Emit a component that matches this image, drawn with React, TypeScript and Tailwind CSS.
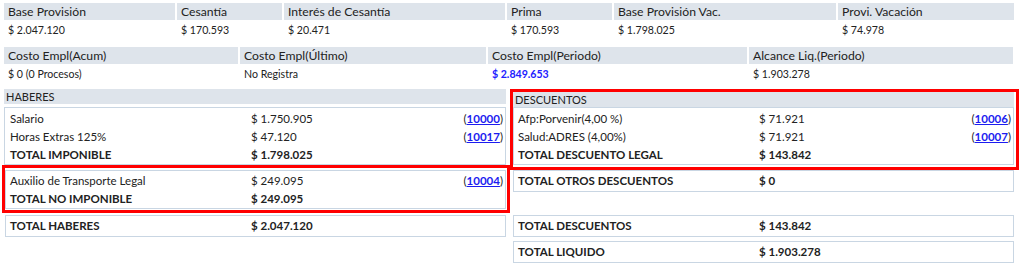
const top1 = [
  { label: 'Base Provisión', value: '$ 2.047.120' },
  { label: 'Cesantía', value: '$ 170.593' },
  { label: 'Interés de Cesantía', value: '$ 20.471' },
  { label: 'Prima', value: '$ 170.593' },
  { label: 'Base Provisión Vac.', value: '$ 1.798.025' },
  { label: 'Provi. Vacación', value: '$ 74.978' },
]

const top2 = [
  { label: 'Costo Empl(Acum)', value: '$ 0 (0 Procesos)' },
  { label: 'Costo Empl(Último)', value: 'No Registra' },
  { label: 'Costo Empl(Periodo)', value: '$ 2.849.653', blue: true },
  { label: 'Alcance Liq.(Periodo)', value: '$ 1.903.278' },
]

type Item = { label: string; amount: string; code?: string; bold?: boolean }

function InfoTable({
  items,
  cols,
}: {
  items: { label: string; value: string; blue?: boolean }[]
  cols: string
}) {
  return (
    <div className={`grid ${cols} gap-x-[2px] gap-y-[2px]`}>
      {items.map((it) => (
        <div key={it.label} className="h-[17px] bg-[#dee4eb] pl-[4px] text-[12.2px] leading-[17px] text-[#222]">
          {it.label}
        </div>
      ))}
      {items.map((it) => (
        <div
          key={it.label + '-v'}
          className={`h-[17px] pl-[4px] text-[10.6px] leading-[17px] ${
            it.blue ? 'font-bold text-[#2121ff]' : 'text-[#222]'
          }`}
        >
          {it.value}
        </div>
      ))}
    </div>
  )
}

function Row({ label, amount, code, bold }: Item) {
  return (
    <div
      className={`grid h-[18px] grid-cols-[241px_1fr_auto] items-center pl-[4px] pr-[2px] text-[11.5px] text-[#222] ${
        bold ? 'font-bold' : ''
      }`}
    >
      <span>{label}</span>
      <span>{amount}</span>
      {code ? (
        <span>
          (<span className="font-bold text-[#1c1cf0] underline">{code}</span>)
        </span>
      ) : (
        <span />
      )}
    </div>
  )
}

function Box({ items, className = '' }: { items: Item[]; className?: string }) {
  return (
    <div className={`border border-[#c9d6e3] ${className}`}>
      {items.map((it) => (
        <Row key={it.label} {...it} />
      ))}
    </div>
  )
}

function TotalBox({ label, amount }: { label: string; amount: string }) {
  return (
    <div className="border border-[#c9d6e3] py-[1px]">
      <Row label={label} amount={amount} bold />
    </div>
  )
}

function SectionHead({ title }: { title: string }) {
  return (
    <div className="h-[15px] bg-[#dee4eb] pl-[2px] text-[11px] leading-[15px] text-[#222]">{title}</div>
  )
}

export default function App() {
  return (
    <div className="h-[268px] w-[1024px] overflow-hidden bg-white pl-[4px] pt-[3px] [font-family:Lato,_sans-serif]">
      <InfoTable items={top1} cols="grid-cols-[171px_105px_221px_105px_222px_176px]" />
      <div className="mt-[8px]">
        <InfoTable items={top2} cols="grid-cols-[234px_246px_259px_264px]" />
      </div>

      <div className="mt-[6px] grid grid-cols-[502px_501px] gap-x-[7px] gap-y-[2px]">
        {/* Haberes */}
        <div>
          <SectionHead title="HABERES" />
          <Box
            className="mt-[3px] pt-[2px] pl-[1px]"
            items={[
              { label: 'Salario', amount: '$ 1.750.905', code: '10000' },
              { label: 'Horas Extras 125%', amount: '$ 47.120', code: '10017' },
              { label: 'TOTAL IMPONIBLE', amount: '$ 1.798.025', bold: true },
            ]}
          />
          <div className="-ml-[2px] -mr-[4px] border-[3px] border-[#f00] pt-[2px] pb-[1px] pl-[0px] pr-[1px]">
            <Box
              className="pt-[1px]"
              items={[
                { label: 'Auxilio de Transporte Legal', amount: '$ 249.095', code: '10004' },
                { label: 'TOTAL NO IMPONIBLE', amount: '$ 249.095', bold: true },
              ]}
            />
          </div>
        </div>

        {/* Descuentos */}
        <div>
          <div className="-ml-[3px] -mr-[5px] border-[3px] border-[#f00] pr-[2px] pb-[2px]">
            <SectionHead title="DESCUENTOS" />
            <Box
              className="pt-[2px]"
              items={[
                { label: 'Afp:Porvenir(4,00 %)', amount: '$ 71.921', code: '10006' },
                { label: 'Salud:ADRES (4,00%)', amount: '$ 71.921', code: '10007' },
                { label: 'TOTAL DESCUENTO LEGAL', amount: '$ 143.842', bold: true },
              ]}
            />
          </div>
          <TotalBox label="TOTAL OTROS DESCUENTOS" amount="$ 0" />
        </div>

        <div className="pl-[1px]">
          <TotalBox label="TOTAL HABERES" amount="$ 2.047.120" />
        </div>
        <TotalBox label="TOTAL DESCUENTOS" amount="$ 143.842" />

        <div />
        <div className="mt-[2px]">
          <TotalBox label="TOTAL LIQUIDO" amount="$ 1.903.278" />
        </div>
      </div>
    </div>
  )
}
